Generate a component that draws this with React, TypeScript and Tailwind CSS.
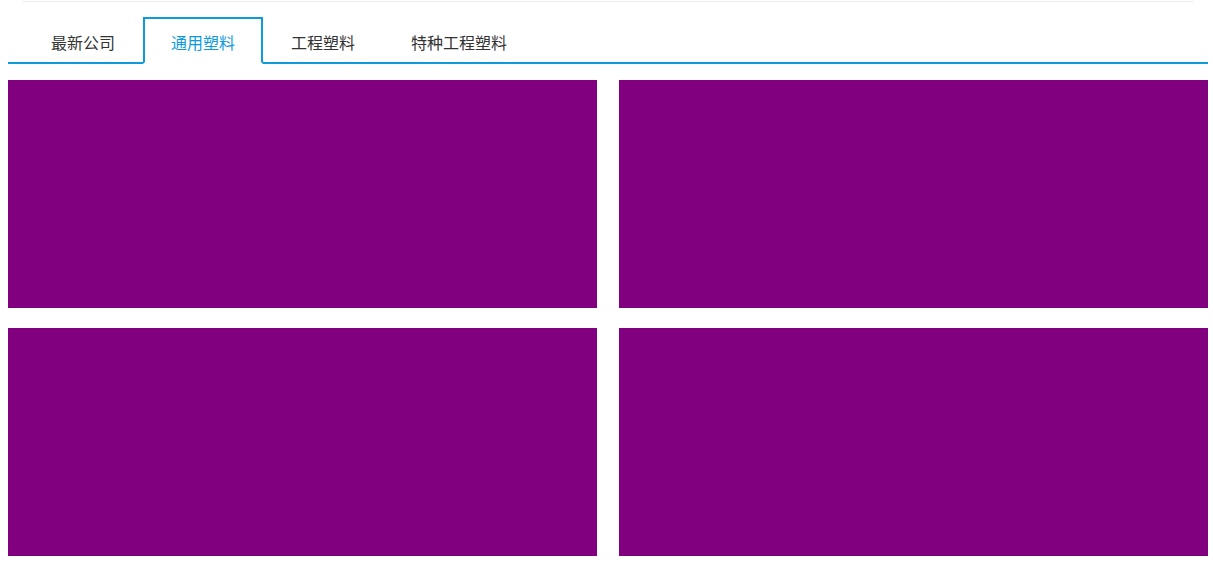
import React from "react";

const tabs = ["最新公司", "通用塑料", "工程塑料", "特种工程塑料"];

export default function App() {
  const active = 1;
  return (
    <div className="bg-white min-h-[563px]" style={{ fontFamily: '"Noto Sans CJK SC", "Noto Sans", sans-serif' }}>
      <div className="w-[1200px] ml-2">
        <div className="mx-[15px] mt-px h-px bg-[#ebebeb]" />
        <div className="mt-[15px] flex border-b-2 border-[#0f9bdb] pl-[15px]">
          {tabs.map((t, i) =>
            i === active ? (
              <div
                key={t}
                className="-mb-[2px] border-2 border-[#0f9bdb] border-b-white bg-white px-[26px] pt-[12px] pb-[9px] text-[16px] leading-[22px] text-[#0f9bdb]"
              >
                {t}
              </div>
            ) : (
              <div
                key={t}
                className="-mb-[2px] border-2 border-transparent px-[26px] pt-[12px] pb-[9px] text-[16px] leading-[22px] text-[#333333]"
              >
                {t}
              </div>
            )
          )}
        </div>
        <div className="mt-4 grid grid-cols-[589px_589px] gap-x-[22px] gap-y-5">
          <div className="h-[228px] bg-[#800080]" />
          <div className="h-[228px] bg-[#800080]" />
          <div className="h-[228px] bg-[#800080]" />
          <div className="h-[228px] bg-[#800080]" />
        </div>
      </div>
    </div>
  );
}
